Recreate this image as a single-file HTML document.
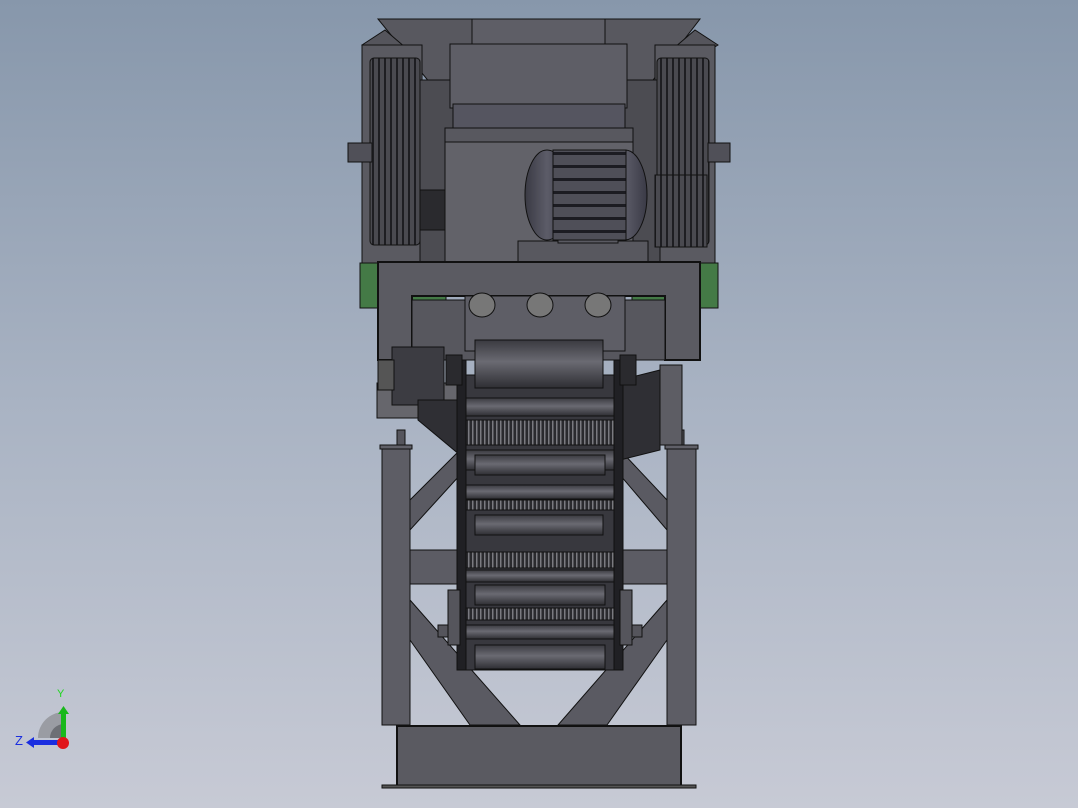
<!DOCTYPE html>
<html><head><meta charset="utf-8"><style>
html,body{margin:0;padding:0;width:1078px;height:808px;overflow:hidden}
body{background:linear-gradient(#8797ab 0%,#a9b3c3 50%,#c7cad5 100%)}
svg{position:absolute;left:0;top:0}
</style></head><body>
<svg width="1078" height="808" viewBox="0 0 1078 808" xmlns="http://www.w3.org/2000/svg">
<defs>
<linearGradient id="roll" x1="0" y1="0" x2="0" y2="1"><stop offset="0" stop-color="#3a3a40"/><stop offset=".45" stop-color="#6a6a72"/><stop offset="1" stop-color="#2e2e33"/></linearGradient>
<linearGradient id="mot" x1="0" y1="0" x2="1" y2="0"><stop offset="0" stop-color="#3a3a44"/><stop offset=".5" stop-color="#5c5c68"/><stop offset="1" stop-color="#3a3a46"/></linearGradient>
<pattern id="fly" width="6" height="10" patternUnits="userSpaceOnUse"><rect width="6" height="10" fill="#4a4a50"/><rect width="2" height="10" fill="#1e1e22"/></pattern>
<pattern id="mstr" width="10" height="13" patternUnits="userSpaceOnUse"><rect width="10" height="13" fill="#4f4f58"/><rect y="9" width="10" height="3" fill="#1c1c22"/></pattern>
<pattern id="teeth" width="4" height="10" patternUnits="userSpaceOnUse"><rect width="4" height="10" fill="#2a2a2e"/><rect width="1.5" height="10" fill="#7a7a80"/></pattern>
</defs>
<g stroke="#111" stroke-width="1">
<!-- legs & braces -->
<rect x="397" y="430" width="8" height="20" fill="#55555c"/>
<rect x="676" y="430" width="8" height="20" fill="#55555c"/>
<polygon points="410,600 410,640 470,725 520,725" fill="#5a5a62"/>
<polygon points="667,600 667,640 607,725 558,725" fill="#5a5a62"/>
<polygon points="410,500 460,450 460,475 410,530" fill="#5a5a62"/>
<polygon points="667,500 620,450 620,475 667,530" fill="#5a5a62"/>
<rect x="410" y="550" width="257" height="34" fill="#5c5c64"/>
<rect x="382" y="446" width="28" height="279" fill="#5d5d65"/>
<rect x="667" y="446" width="29" height="279" fill="#5d5d65"/>
<rect x="380" y="445" width="32" height="4" fill="#606068"/>
<rect x="665" y="445" width="33" height="4" fill="#606068"/>
<rect x="397" y="726" width="284" height="60" fill="#5a5a61" stroke-width="2"/>
<rect x="382" y="785" width="314" height="3" fill="#555"/>
<!-- hopper -->
<polygon points="378,19 700,19 630,110 452,110" fill="#58585f"/>
<rect x="472" y="19" width="133" height="25" fill="#5e5e66"/>
<polygon points="362,45 385,30 420,60 420,80" fill="#55555c"/>
<polygon points="718,45 695,30 660,60 660,80" fill="#55555c"/>
<!-- side frames -->
<rect x="362" y="45" width="60" height="218" fill="#5a5a61"/>
<rect x="655" y="45" width="60" height="218" fill="#5a5a61"/>
<rect x="420" y="80" width="35" height="185" fill="#4c4c52"/>
<rect x="625" y="80" width="35" height="185" fill="#4c4c52"/>
<rect x="420" y="190" width="30" height="40" fill="#2a2a2e"/>
<rect x="370" y="58" width="50" height="187" fill="url(#fly)" rx="4"/>
<rect x="657" y="58" width="52" height="187" fill="url(#fly)" rx="4"/>
<rect x="348" y="143" width="24" height="19" fill="#505058"/>
<rect x="708" y="143" width="22" height="19" fill="#505058"/>
<rect x="655" y="175" width="52" height="72" fill="url(#fly)"/>
<!-- center body -->
<rect x="450" y="44" width="177" height="64" fill="#5e5e66"/>
<rect x="453" y="104" width="172" height="28" fill="#555560"/>
<rect x="445" y="128" width="188" height="136" fill="#626269"/>
<rect x="445" y="128" width="188" height="14" fill="#58585f"/>
<!-- motor -->
<rect x="518" y="241" width="130" height="22" fill="#58585f"/>
<rect x="558" y="225" width="60" height="18" fill="#5a5a62"/>
<ellipse cx="547" cy="195" rx="22" ry="45" fill="url(#mot)"/>
<ellipse cx="625" cy="195" rx="22" ry="45" fill="url(#mot)"/>
<rect x="553" y="150" width="73" height="90" fill="url(#mstr)"/>
<!-- green blocks -->
<rect x="360" y="263" width="20" height="45" fill="#447a46"/>
<rect x="699" y="263" width="19" height="45" fill="#447a46"/>
<rect x="410" y="295" width="36" height="12" fill="#447a46"/>
<rect x="632" y="295" width="35" height="12" fill="#447a46"/>
<!-- crossbeam U -->
<path d="M378,262 H700 V360 H665 V296 H412 V360 H378 Z" fill="#5b5b62" stroke-width="2"/>
<rect x="412" y="300" width="253" height="60" fill="#57575e"/>
<rect x="465" y="296" width="160" height="55" fill="#5e5e66"/>
<ellipse cx="482" cy="305" rx="13" ry="12" fill="#777"/>
<ellipse cx="540" cy="305" rx="13" ry="12" fill="#777"/>
<ellipse cx="598" cy="305" rx="13" ry="12" fill="#777"/>
<!-- side motor box -->
<rect x="377" y="383" width="85" height="35" fill="#66666c"/>
<rect x="392" y="347" width="52" height="58" fill="#3c3c42"/>
<rect x="378" y="360" width="16" height="30" fill="#555"/>
<!-- side hoppers -->
<polygon points="418,400 460,400 460,455 418,420" fill="#2f2f34"/>
<polygon points="660,370 620,380 620,460 660,450" fill="#2f2f34"/>
<rect x="660" y="365" width="22" height="80" fill="#5d5d64"/>
<!-- conveyor -->
<rect x="458" y="375" width="165" height="295" fill="#38383e"/>
<g fill="url(#roll)">
<rect x="475" y="340" width="128" height="48" />
<rect x="466" y="398" width="150" height="18"/>
<rect x="466" y="450" width="150" height="20"/>
<rect x="475" y="455" width="130" height="20"/>
<rect x="466" y="485" width="150" height="14"/>
<rect x="475" y="515" width="128" height="20"/>
<rect x="466" y="570" width="150" height="12"/>
<rect x="475" y="585" width="130" height="20"/>
<rect x="466" y="625" width="150" height="14"/>
<rect x="475" y="645" width="130" height="24"/>
</g>
<rect x="466" y="420" width="150" height="25" fill="url(#teeth)"/>
<rect x="466" y="500" width="150" height="10" fill="url(#teeth)"/>
<rect x="466" y="552" width="150" height="16" fill="url(#teeth)"/>
<rect x="466" y="608" width="150" height="12" fill="url(#teeth)"/>
<rect x="457" y="360" width="9" height="310" fill="#202024"/>
<rect x="614" y="360" width="9" height="310" fill="#202024"/>
<rect x="446" y="355" width="16" height="30" fill="#2a2a2e"/>
<rect x="620" y="355" width="16" height="30" fill="#2a2a2e"/>
<rect x="448" y="590" width="12" height="55" fill="#55555c"/>
<rect x="620" y="590" width="12" height="55" fill="#55555c"/>
<rect x="438" y="625" width="10" height="12" fill="#55555c"/>
<rect x="632" y="625" width="10" height="12" fill="#55555c"/>
</g>
<!-- axis triad -->
<path d="M38,738 A26,26 0 0 1 64,712 L64,738 Z" fill="#9a9ca3"/>
<path d="M50,738 A14,14 0 0 1 64,724 L64,738 Z" fill="#6d6f75"/>
<rect x="61" y="712" width="5" height="28" fill="#19b81c"/>
<polygon points="58,714 63.5,706 69,714" fill="#19b81c"/>
<rect x="32" y="740" width="30" height="5" fill="#1a2ee0"/>
<polygon points="34,737 26,742.5 34,748" fill="#1a2ee0"/>
<circle cx="63" cy="743" r="6" fill="#e0151a"/>
<text x="57" y="697" font-family="Liberation Sans, sans-serif" font-size="11" fill="#1fd61f">Y</text>
<text x="15" y="745" font-family="Liberation Sans, sans-serif" font-size="13" fill="#1a2ee0">Z</text>
</svg>
</body></html>
